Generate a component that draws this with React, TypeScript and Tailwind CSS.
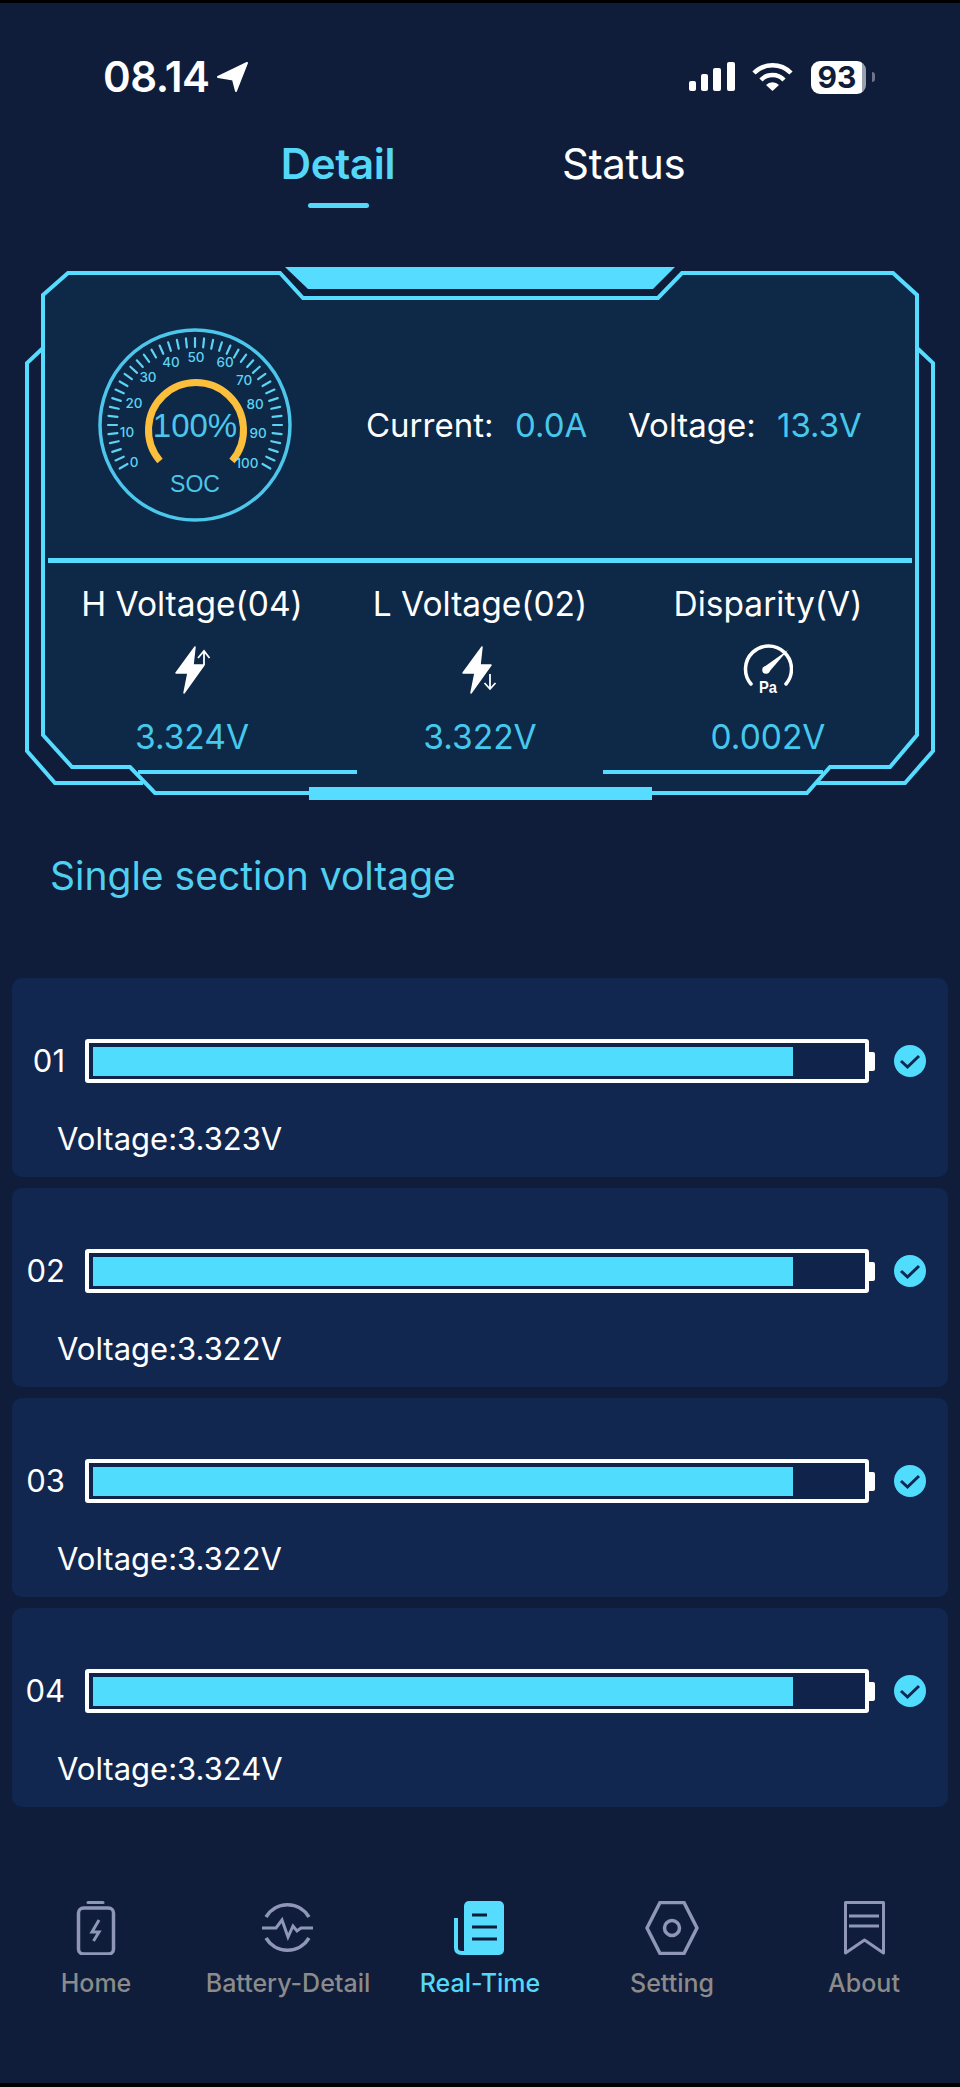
import React from 'react'

const CYAN = '#55dcff'

const rows = [
  { id: '01', voltage: '3.323V' },
  { id: '02', voltage: '3.322V' },
  { id: '03', voltage: '3.322V' },
  { id: '04', voltage: '3.324V' },
]

const gaugeLabels = [
  { t: '0', x: 134, y: 462 },
  { t: '10', x: 127, y: 432 },
  { t: '20', x: 134, y: 403 },
  { t: '30', x: 148, y: 377 },
  { t: '40', x: 171, y: 362 },
  { t: '50', x: 196, y: 357 },
  { t: '60', x: 225, y: 362 },
  { t: '70', x: 244, y: 380 },
  { t: '80', x: 255, y: 404 },
  { t: '90', x: 258, y: 433 },
  { t: '100', x: 247, y: 463 },
]

const Frame = () => (
  <svg className="absolute left-0 top-0 h-[550px] w-[960px]" viewBox="0 260 960 550" fill="none">
    <path
      d="M43 295 L68 273 H280 L303 298 H658 L682 273 H893 L917 295 V735 L890 767 H830 L807 793 H155 L130 767 H72 L43 735 Z"
      fill="#0e2847"
      stroke={CYAN}
      strokeWidth="4"
    />
    <path d="M43 348 L27 363 V751 L55 783 H143" stroke={CYAN} strokeWidth="4" />
    <path d="M917 348 L933 363 V751 L905 783 H817" stroke={CYAN} strokeWidth="4" />
    <path d="M138 772 H357" stroke={CYAN} strokeWidth="4" />
    <path d="M603 772 H823" stroke={CYAN} strokeWidth="4" />
    <polygon points="285,267 675,267 653,289 308,289" fill={CYAN} />
    <rect x="309" y="787" width="343" height="13" fill={CYAN} />
  </svg>
)

const Gauge = () => {
  const ticks = Array.from({ length: 41 }, (_, i) => {
    const a = ((-30 + i * 6) * Math.PI) / 180
    return {
      x1: 195 - 87 * Math.cos(a),
      y1: 425 - 87 * Math.sin(a),
      x2: 195 - 78 * Math.cos(a),
      y2: 425 - 78 * Math.sin(a),
    }
  })
  return (
    <svg className="h-[200px] w-[200px] shrink-0" viewBox="95 325 200 200" fill="none">
      <circle cx="195" cy="425" r="95" stroke="#4cc6ea" strokeWidth="3.5" />
      {ticks.map((t, i) => (
        <line key={i} x1={t.x1} y1={t.y1} x2={t.x2} y2={t.y2} stroke="#5cd3f2" strokeWidth="2.2" strokeLinecap="round" />
      ))}
      <path d="M160 461 A47.5 47.5 0 1 1 232 461" stroke="#fcbf3c" strokeWidth="7" />
      {gaugeLabels.map((l) => (
        <text key={l.t} x={l.x} y={l.y + 5} textAnchor="middle" fontSize="13.5" fontWeight="500" fill="#5cd3f2" fontFamily="Inter, sans-serif">
          {l.t}
        </text>
      ))}
      <text x="195" y="437" textAnchor="middle" fontSize="33" fill="#4cc6ea" fontFamily="Liberation Sans, sans-serif">
        100%
      </text>
      <text x="195" y="492" textAnchor="middle" fontSize="23" fill="#4cc6ea" fontFamily="Liberation Sans, sans-serif">
        SOC
      </text>
    </svg>
  )
}

const BoltUp = () => (
  <svg className="h-[50px] w-[40px]" viewBox="172 646 40 50" fill="none">
    <path d="M195 648 L176 674 H188 L184 694 L204 666 H193 Z" fill="#fff" stroke="#fff" strokeWidth="1.5" strokeLinejoin="round" />
    <path d="M204 666 V653 M198 659 L204 652 L209.5 659" stroke="#fff" strokeWidth="1.8" />
  </svg>
)

const BoltDown = () => (
  <svg className="h-[50px] w-[40px]" viewBox="460 646 40 50" fill="none">
    <path d="M482 648 L463 674 H475 L471 694 L491 666 H480 Z" fill="#fff" stroke="#fff" strokeWidth="1.5" strokeLinejoin="round" />
    <path d="M490 675 V690 M484.5 684 L490 690 L495.5 684" stroke="#fff" strokeWidth="1.8" />
  </svg>
)

const PressureIcon = () => (
  <svg className="h-[58px] w-[50px]" viewBox="743 642 50 58" fill="none">
    <path d="M751 685 A23 23 0 1 1 786 685" stroke="#fff" strokeWidth="3.5" strokeLinecap="round" />
    <polygon points="788,651 769,673 764,668" fill="#fff" />
    <circle cx="766" cy="671" r="3.8" fill="#fff" />
    <text x="768" y="694" textAnchor="middle" fontSize="17" fontWeight="700" fill="#fff" fontFamily="Liberation Sans, sans-serif" textLength="18" lengthAdjust="spacingAndGlyphs">
      Pa
    </text>
  </svg>
)

const StatusBar = () => (
  <div className="mt-[51px] flex h-[46px] items-center pl-[103px]">
    <span className="w-[106px] text-[42px] font-semibold leading-none tracking-[-0.5px] text-white">08.14</span>
    <svg className="ml-[7px] h-[32px] w-[33px]" viewBox="216 62 33 32" fill="none">
      <path d="M247 64 L218 78 L233 80.5 L236 92 Z" fill="#fff" stroke="#fff" strokeWidth="2" strokeLinejoin="round" />
    </svg>
    <svg className="ml-[440px] h-[32px] w-[47px]" viewBox="689 62 47 32">
      <rect x="689" y="82" width="7" height="10" rx="2" fill="#fff" />
      <rect x="701" y="75" width="7" height="17" rx="2" fill="#fff" />
      <rect x="713" y="69" width="8" height="23" rx="2" fill="#fff" />
      <rect x="727" y="63" width="8" height="29" rx="2" fill="#fff" />
    </svg>
    <svg className="ml-[16px] h-[32px] w-[42px]" viewBox="752 62 42 32" fill="none">
      <path d="M754 74 A26 26 0 0 1 791 74" stroke="#fff" strokeWidth="4.5" />
      <path d="M761 81 A16 16 0 0 1 784 81" stroke="#fff" strokeWidth="4.5" />
      <path d="M766 86 L772.5 92 L779 86 A9 9 0 0 0 766 86 Z" fill="#fff" />
    </svg>
    <div className="ml-[17px] flex h-[33px] w-[55px] items-center justify-center rounded-[9px] bg-[linear-gradient(90deg,#ffffff_92%,#9a9fae_92%)] pr-[3px] text-[30px] font-bold leading-none text-[#0f1d3a]">
      93
    </div>
    <div className="ml-[6px] h-[10px] w-[3px] rounded-r-full bg-[#6d7488]" />
  </div>
)

const StatColumn = ({ label, value, icon }: { label: string; value: string; icon: React.ReactNode }) => (
  <div className="flex flex-col items-center">
    <span className="mt-[21px] h-[40px] whitespace-nowrap text-[33.5px] leading-[40px] text-white">{label}</span>
    <div className="mt-[21px] flex h-[50px] items-center justify-center">{icon}</div>
    <span className="mt-[22px] h-[40px] text-[33.5px] leading-[40px] text-[#46c8ec]">{value}</span>
  </div>
)

const CellRow = ({ id, voltage }: { id: string; voltage: string }) => (
  <div className="h-[199px] rounded-[10px] bg-[#12274f]">
    <div className="flex items-center pt-[61px]">
      <span className="w-[53px] text-right text-[31px] leading-[44px] text-white">{id}</span>
      <div className="ml-[20px] flex h-[44px] w-[784px] items-center rounded-[3px] border-4 border-white bg-[#10234a] pl-[4px]">
        <div className="h-[29px] w-[700px] bg-[#50dcfd]" />
      </div>
      <div className="h-[19px] w-[6px] rounded-r-[2px] bg-white" />
      <svg className="ml-[19px] h-[32px] w-[32px]" viewBox="0 0 32 32" fill="none">
        <circle cx="16" cy="16" r="16" fill="#50dcfd" />
        <path d="M7 16 L13.5 22 L25 11" stroke="#12274f" strokeWidth="3" />
      </svg>
    </div>
    <p className="ml-[45px] mt-[36px] text-[31px] leading-[40px] text-white">Voltage:{voltage}</p>
  </div>
)

const navIconClass = 'h-[54px] w-[60px]'

const navItems = [
  {
    label: 'Home',
    icon: (
      <svg className={navIconClass} viewBox="66 1901 60 54" fill="none" stroke="#8f96b8" strokeWidth="3.5">
        <rect x="78.5" y="1908" width="35" height="46" rx="5" />
        <path d="M88 1902.5 H103" strokeWidth="3" strokeLinecap="round" />
        <path d="M99 1920 L92 1932 H99 L93.5 1941" strokeWidth="3" />
      </svg>
    ),
  },
  {
    label: 'Battery-Detail',
    icon: (
      <svg className={navIconClass} viewBox="258 1901 60 54" fill="none" stroke="#8f96b8" strokeWidth="3.5">
        <path d="M266 1917 A25 25 0 0 1 309 1917" />
        <path d="M266 1938 A25 25 0 0 0 309 1938" />
        <path d="M262 1928 H276 L282 1920 L288 1937 L293 1926 L297 1931 L301 1928 H313" strokeWidth="3" />
      </svg>
    ),
  },
  {
    label: 'Real-Time',
    active: true,
    icon: (
      <svg className={navIconClass} viewBox="450 1901 60 54" fill="none">
        <rect x="464" y="1901" width="40" height="54" rx="5" fill={CYAN} />
        <path d="M456 1918 V1948 Q456 1953 462 1953 H470" stroke={CYAN} strokeWidth="4" />
        <path d="M472 1915 H487 M472 1927 H497 M472 1939 H497" stroke="#0f1d3a" strokeWidth="3" />
      </svg>
    ),
  },
  {
    label: 'Setting',
    icon: (
      <svg className={navIconClass} viewBox="641 1901 60 54" fill="none" stroke="#8f96b8" strokeWidth="3.5">
        <polygon points="659,1902.5 683,1902.5 696,1928 683,1953.5 659,1953.5 646,1928" strokeLinejoin="round" />
        <circle cx="671" cy="1928" r="7.5" />
      </svg>
    ),
  },
  {
    label: 'About',
    icon: (
      <svg className={navIconClass} viewBox="833 1901 60 54" fill="none" stroke="#8f96b8" strokeWidth="3">
        <path d="M844.5 1902.5 H882.5 V1953 L863.5 1940 L844.5 1953 Z" strokeLinejoin="round" />
        <path d="M848 1916 H878 M848 1926 H878" />
      </svg>
    ),
  },
]

export default function App() {
  return (
    <div className="flex h-[2087px] w-[960px] flex-col overflow-hidden border-b-4 border-t-[3px] border-black bg-[#0f1d3a] font-['Inter',sans-serif]">
      <StatusBar />

      <div className="flex pl-[280px] pt-[44px]">
        <div className="flex w-[116px] flex-col items-center">
          <span className="h-[40px] whitespace-nowrap text-[42px] font-semibold leading-[40px] tracking-[-0.3px] text-[#55d8f8]">Detail</span>
          <div className="mt-[19px] h-[5px] w-[61px] rounded-full bg-[#55d8f8]" />
        </div>
        <span className="ml-[166px] h-[40px] text-[42px] leading-[40px] tracking-[-0.3px] text-white">Status</span>
      </div>

      <div className="relative mt-[52px] h-[550px] w-[960px]">
        <Frame />
        <div className="relative px-[48px]">
          <div className="flex h-[298px] items-start pl-[47px] pt-[65px]">
            <Gauge />
            <div className="ml-[71px] flex h-[200px] items-center whitespace-nowrap pt-[2px] text-[33px]">
              <span className="w-[149px] text-white">Current:</span>
              <span className="w-[113px] text-[#46c8ec]">0.0A</span>
              <span className="w-[149px] text-white">Voltage:</span>
              <span className="text-[#46c8ec]">13.3V</span>
            </div>
          </div>
          <div className="h-[5px] bg-[#55dcff]" />
          <div className="grid grid-cols-3">
            <StatColumn label="H Voltage(04)" value="3.324V" icon={<BoltUp />} />
            <StatColumn label="L Voltage(02)" value="3.322V" icon={<BoltDown />} />
            <StatColumn label="Disparity(V)" value="0.002V" icon={<PressureIcon />} />
          </div>
        </div>
      </div>

      <h2 className="ml-[50px] mt-[44px] h-[44px] text-[39px] font-normal leading-[44px] text-[#4fd0f0]">Single section voltage</h2>

      <div className="mx-[12px] mt-[80px] flex flex-col gap-[11px]">
        {rows.map((r) => (
          <CellRow key={r.id} id={r.id} voltage={r.voltage} />
        ))}
      </div>

      <div className="mt-[94px] grid grid-cols-5">
        {navItems.map((item) => (
          <div key={item.label} className="flex flex-col items-center">
            {item.icon}
            <span className={`mt-[12px] h-[32px] whitespace-nowrap text-[25px] font-medium leading-[32px] ${item.active ? 'text-[#55d8f8]' : 'text-[#8b8b8b]'}`}>
              {item.label}
            </span>
          </div>
        ))}
      </div>
    </div>
  )
}
